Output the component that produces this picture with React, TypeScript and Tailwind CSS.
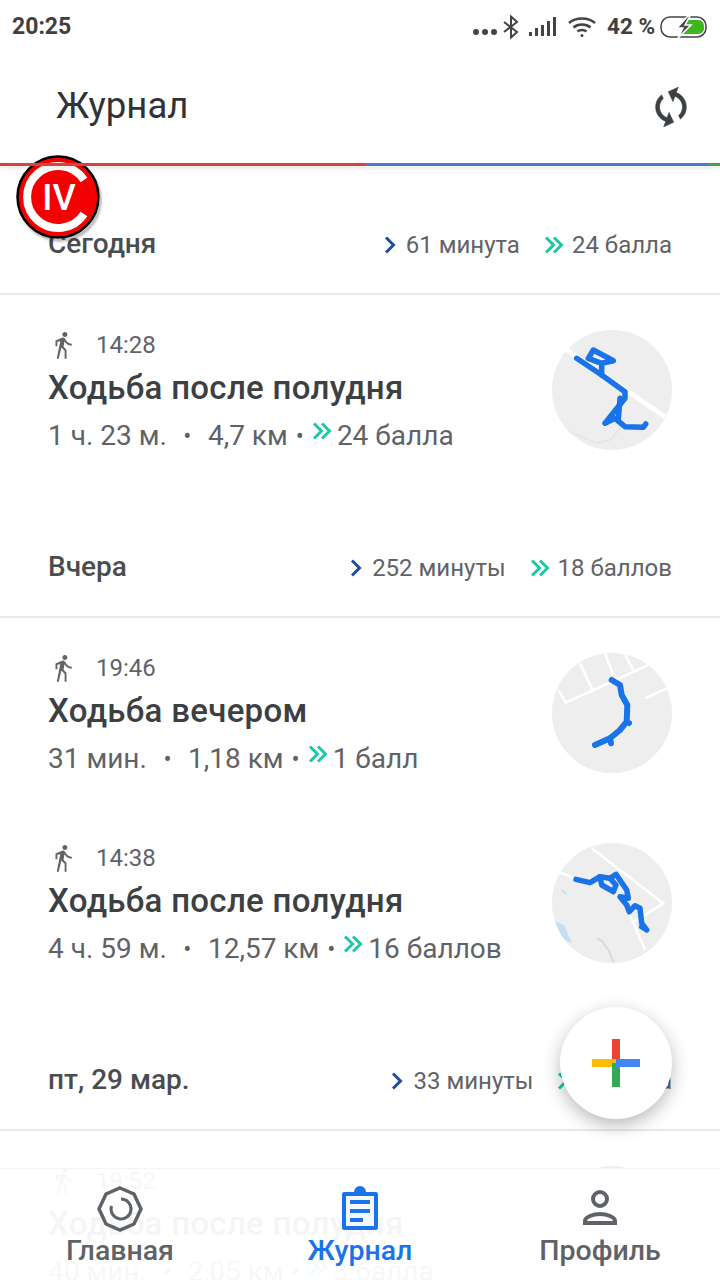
import type { ReactNode } from "react";

const font = { roboto: "font-['Roboto',sans-serif]" };

function One() {
  return (
    <svg width="14" height="20" viewBox="0 0 14 20" fill="none" stroke="#1c4f9c" strokeWidth="3" className="shrink-0">
      <path d="M3 2.5 10.5 10 3 17.5" />
    </svg>
  );
}

function Two({ className = "" }: { className?: string }) {
  return (
    <svg width="20" height="20" viewBox="0 0 20 20" fill="none" stroke="#1ec8a5" strokeWidth="3" className={`shrink-0 ${className}`}>
      <path d="M2 2.5 9.5 10 2 17.5M10 2.5 17.5 10 10 17.5" />
    </svg>
  );
}

function Section({ day, mins, pts, height }: { day: string; mins: string; pts: string; height: string }) {
  return (
    <div className={`flex items-end justify-between pl-[48px] pr-[48px] pb-[33px] border-b-2 border-[#e8e8e8] ${height}`}>
      <div className="text-[28px] leading-[32px] font-medium text-[#4a4d50]">{day}</div>
      <div className="flex translate-y-[1px] items-center text-[24px] leading-[32px] text-[#5f6368]">
        <One />
        <span className="ml-[9px]">{mins}</span>
        <Two className="ml-[24px]" />
        <span className="ml-[8px]">{pts}</span>
      </div>
    </div>
  );
}

function Walk() {
  return (
    <svg width="30" height="30" viewBox="0 0 24 24" fill="#5f6368" className="shrink-0">
      <path d="M13.5 5.5c1.1 0 2-.9 2-2s-.9-2-2-2-2 .9-2 2 .9 2 2 2zM9.8 8.9 7 23h1.6l2.1-9 2.6 2.5V23h1.5v-7.3l-2.4-2.4.8-4.3C14.2 11 16.4 12.5 19 12.5V11c-2 0-3.6-1.1-4.5-2.6l-1-1.6C13.1 6.3 12.500 6 12 6c-.3 0-.5.1-.8.1L6 8.300V13h1.500V9.300l2.300-.4z" />
    </svg>
  );
}

function Item({ time, title, a, b, pts, map }: { time: string; title: string; a: string; b: string; pts: string; map: ReactNode }) {
  return (
    <div className="flex h-[190px] justify-between pl-[48px] pr-[48px]">
      <div className="pt-[34px]">
        <div className="flex h-[32px] items-center text-[24px] text-[#5f6368]">
          <span className="w-[48px]">
            <Walk />
          </span>
          <span>{time}</span>
        </div>
        <div className="mt-[5px] text-[33px] leading-[44px] font-medium tracking-[0.3px] text-[#3c4043]">{title}</div>
        <div className="mt-[6px] flex h-[40px] items-center text-[28px] text-[#5f6368] whitespace-nowrap">
          <span>{a}</span>
          <span className="mx-[16.5px] text-[24px]">•</span>
          <span>{b}</span>
          <span className="ml-[8px] mr-[8px] text-[24px]">•</span>
          <Two className="mb-[10px]" />
          <span className="ml-[5px]">{pts}</span>
        </div>
      </div>
      <div className="pt-[35px]">{map}</div>
    </div>
  );
}

function MapOne() {
  return (
    <svg width="120" height="120" viewBox="0 0 120 120" fill="none" className="rounded-full bg-[#eeeeee]">
      <path d="M14.700 20 113 86.700" stroke="#fff" strokeWidth="5" />
      <path d="M16 101 44.700 113 58 110 69.700 96.700" stroke="#e4e4e4" strokeWidth="1.500" />
      <g stroke="#1a73e8" strokeWidth="5.500" strokeLinecap="round" strokeLinejoin="round">
        <path d="M24.700 28.300 49.700 45 73 61.700V68.300L53 93.300 63 88.300 73 96.700 91.300 97.300 93.700 94" />
        <path d="M41.300 20 36.300 28.300 49.700 33.300 61.300 30.700 41.300 20ZM49.700 33.300V45M68 68.300 66.300 90" />
      </g>
    </svg>
  );
}

function MapTwo() {
  return (
    <svg width="120" height="120" viewBox="0 0 120 120" fill="none" className="rounded-full bg-[#eeeeee]">
      <g stroke="#fff" strokeWidth="2.500">
        <path d="M6.300 37 13.700 49.700 96.300 12M28 10.300 41.300 38.700M53 .3 61.300 22M73 2 81.300 17M93 45.300 114.700 35.300" />
      </g>
      <g stroke="#1a73e8" strokeWidth="6" strokeLinecap="round" strokeLinejoin="round">
        <path d="M59.700 27 68 32 69.700 42 75.300 52 74.700 68.700 68 77 58 85.300 43 92M58 85 59 90.300M74.700 68.700 77 70" />
      </g>
    </svg>
  );
}

function MapThree() {
  return (
    <svg width="120" height="120" viewBox="0 0 120 120" fill="none" className="rounded-full bg-[#eeeeee]">
      <path d="M3 78 12 82 20 100 10 96Z" fill="#c3dff5" />
      <path d="M9.700 47 14.700 51.300M44.700 95.300 50 98 57 108 61.300 119" stroke="#cfdde8" strokeWidth="2" />
      <g stroke="#fff" strokeWidth="2.500">
        <path d="M6.300 28.700 26.300 37M39.700 5.300 111.300 60.300 81.300 79.300M78 72 93 107" />
      </g>
      <g stroke="#1a73e8" strokeWidth="5.500" strokeLinecap="round" strokeLinejoin="round">
        <path d="M24 36.300 38 39.700 48 33.700 58 35.300 64 31.300 74.700 47 76.300 55.300 68 53.700 74.700 62 77.300 68.700 83 62.700 88 65.300 89.700 80.300 94.700 87 89.700 83.700" />
        <path d="M48 33.700 49.700 42 61.300 48.700 64 42 58 35.300" />
      </g>
    </svg>
  );
}

function MapFour() {
  return <svg width="120" height="120" viewBox="0 0 120 120" className="rounded-full bg-[#eeeeee]" />;
}

function StatusBar() {
  return (
    <div className="flex h-[52px] items-center justify-between pl-[12px] pr-[12px] pt-[2px] text-[23px] font-bold text-[#3f3f3f]">
      <span>20:25</span>
      <div className="flex items-center">
        <span className="mt-[10px] flex gap-[3px]">
          <i className="size-[6px] rounded-full bg-[#444]" />
          <i className="size-[6px] rounded-full bg-[#444]" />
          <i className="size-[6px] rounded-full bg-[#444]" />
        </span>
        <svg width="18" height="24" viewBox="0 0 18 24" fill="none" stroke="#444" strokeWidth="2" className="ml-[5px]">
          <path d="M2 7 15 17 9 22.500V1.500L15 7 2 17" />
        </svg>
        <svg width="29" height="22" viewBox="0 0 29 22" fill="#444" className="ml-[8px]">
          <path d="M1 16h3v4H1zM7 12h3v8H7zM13 9h3v11h-3zM19 5h3v15h-3zM25 1h3v19h-3z" />
        </svg>
        <svg width="30" height="22" viewBox="0 0 30 22" fill="none" stroke="#444" strokeWidth="2.500" className="ml-[10px]">
          <path d="M2 7C9 1 21 1 28 7M6.500 11.500C11 7.500 19 7.500 23.500 11.500M10.500 15.500C13 13.500 17 13.500 19.500 15.500" />
          <circle cx="15" cy="19.500" r="1.500" fill="#444" stroke="none" />
        </svg>
        <span className="ml-[10px] w-[47px] whitespace-nowrap text-[22.5px]">42 %</span>
        <svg width="48" height="24" viewBox="0 0 48 24" fill="none" className="ml-[6px]">
          <rect x="1" y="2" width="45" height="20" rx="9" stroke="#444" strokeWidth="1.500" />
          <path d="M26 5h12a6 6 0 0 1 6 7 6 6 0 0 1-6 7H22Z" fill="#3fb51f" />
          <path d="M28 1 17 13h6l-5 10 13-13h-6l5-9z" fill="#444" stroke="#fff" strokeWidth="1.500" />
        </svg>
      </div>
    </div>
  );
}

function Header() {
  return (
    <div className="flex h-[111px] items-center justify-between pb-[3px] pl-[56px] pr-[26px]">
      <span className="text-[36.5px] text-[#303336]">Журнал</span>
      <svg width="46" height="46" viewBox="0 0 24 24" fill="#3c4043" stroke="#3c4043" strokeWidth="0.3" className="translate-y-[1px] rotate-[20deg]">
        <path d="M12 4V1L8 5l4 4V6c3.310 0 6 2.690 6 6 0 1.010-.25 1.970-.7 2.800l1.460 1.460C19.540 15.030 20 13.570 20 12c0-4.420-3.580-8-8-8zm0 14c-3.310 0-6-2.690-6-6 0-1.010.25-1.970.7-2.800L5.240 7.740C4.460 8.970 4 10.430 4 12c0 4.420 3.580 8 8 8v3l4-4-4-4v3z" />
      </svg>
    </div>
  );
}

function Logo() {
  return (
    <div className="absolute left-[16px] top-[155px] size-[84px] rounded-full shadow-[2px_3px_2px_rgba(0,0,0,0.25)]">
      <svg width="84" height="84" viewBox="0 0 84 84" fill="none">
        <circle cx="42" cy="42" r="40.500" fill="#f40000" stroke="#000" strokeWidth="2.500" />
        <path d="M68 25A31 31 0 1 0 68 59" stroke="#fff" strokeWidth="8" />
        <text x="43" y="55" textAnchor="middle" fontSize="36" fontWeight="500" fill="#fff" fontFamily="Roboto, sans-serif">IV</text>
      </svg>
    </div>
  );
}

function Fab() {
  return (
    <div className="absolute left-[560px] top-[1007px] flex size-[112px] items-center justify-center rounded-full bg-white shadow-[0_6px_18px_rgba(0,0,0,0.28)]">
      <svg width="48" height="48" viewBox="0 0 48 48">
        <path d="M20 0h8v24h-8z" fill="#ea4335" />
        <path d="M0 20h24v8H0z" fill="#fbbc04" />
        <path d="M20 24h8v24h-8z" fill="#34a853" />
        <path d="M24 20h24v8H24z" fill="#4285f4" />
      </svg>
    </div>
  );
}

function BottomNav() {
  return (
    <div className="absolute inset-x-0 bottom-0 flex h-[112px] border-t border-[#f4f4f4] bg-white/95 text-[28.5px] font-medium text-[#5f6368]">
      <div className="flex flex-1 flex-col items-center pt-[16px]">
        <svg width="48" height="48" viewBox="0 0 48 48" fill="none" stroke="#5f6368" strokeWidth="3.500">
          <path d="M24 3 38 9 45 24 38 39 24 45 10 39 3 24 10 9Z" />
          <path d="M25 14a10 10 0 1 1-9.500 7" strokeWidth="3" />
        </svg>
        <span className="mt-[1px] leading-[34px]">Главная</span>
      </div>
      <div className="flex flex-1 flex-col items-center pt-[16px] text-[#1a73e8]">
        <svg width="48" height="48" viewBox="0 0 48 48">
          <path d="M6 9a2 2 0 0 1 2-2h10a6 6 0 0 1 12 0h10a2 2 0 0 1 2 2v34a2 2 0 0 1-2 2H8a2 2 0 0 1-2-2Z" fill="#1a73e8" />
          <path d="M10 11h28v30H10z" fill="#f4f8fe" />
          <path d="M14 15h20v4H14zM14 24h20v4H14zM14 33h13v4H14z" fill="#1a73e8" />
        </svg>
        <span className="mt-[1px] leading-[34px]">Журнал</span>
      </div>
      <div className="flex flex-1 flex-col items-center pt-[16px]">
        <svg width="48" height="48" viewBox="0 0 48 48" fill="none" stroke="#5f6368" strokeWidth="4">
          <circle cx="24" cy="14" r="7" />
          <path d="M9 38v-2c0-4 8-7 15-7s15 3 15 7v2Z" />
        </svg>
        <span className="mt-[1px] leading-[34px]">Профиль</span>
      </div>
    </div>
  );
}

export default function App() {
  return (
    <div className={`relative h-[1280px] w-[720px] overflow-hidden bg-white ${font.roboto}`}>
      <StatusBar />
      <Header />
      <div className="relative z-10 flex h-[3px] shadow-[0_2px_4px_rgba(0,0,0,0.12)]">
        <div className="w-[365px] bg-[#d9413a]" />
        <div className="flex-1 bg-[#4a7cc9]" />
        <div className="w-[12px] bg-[#3f9e57]" />
      </div>
      <Section day="Сегодня" mins="61 минута" pts="24 балла" height="h-[129px]" />
      <Item time="14:28" title="Ходьба после полудня" a="1 ч. 23 м." b="4,7 км" pts="24 балла" map={<MapOne />} />
      <Section day="Вчера" mins="252 минуты" pts="18 баллов" height="h-[133px]" />
      <Item time="19:46" title="Ходьба вечером" a="31 мин." b="1,18 км" pts="1 балл" map={<MapTwo />} />
      <Item time="14:38" title="Ходьба после полудня" a="4 ч. 59 м." b="12,57 км" pts="16 баллов" map={<MapThree />} />
      <Section day="пт, 29 мар." mins="33 минуты" pts="3 балла" height="h-[133px]" />
      <Item time="19:52" title="Ходьба после полудня" a="40 мин." b="2,05 км" pts="3 балла" map={<MapFour />} />
      <Logo />
      <Fab />
      <BottomNav />
    </div>
  );
}
